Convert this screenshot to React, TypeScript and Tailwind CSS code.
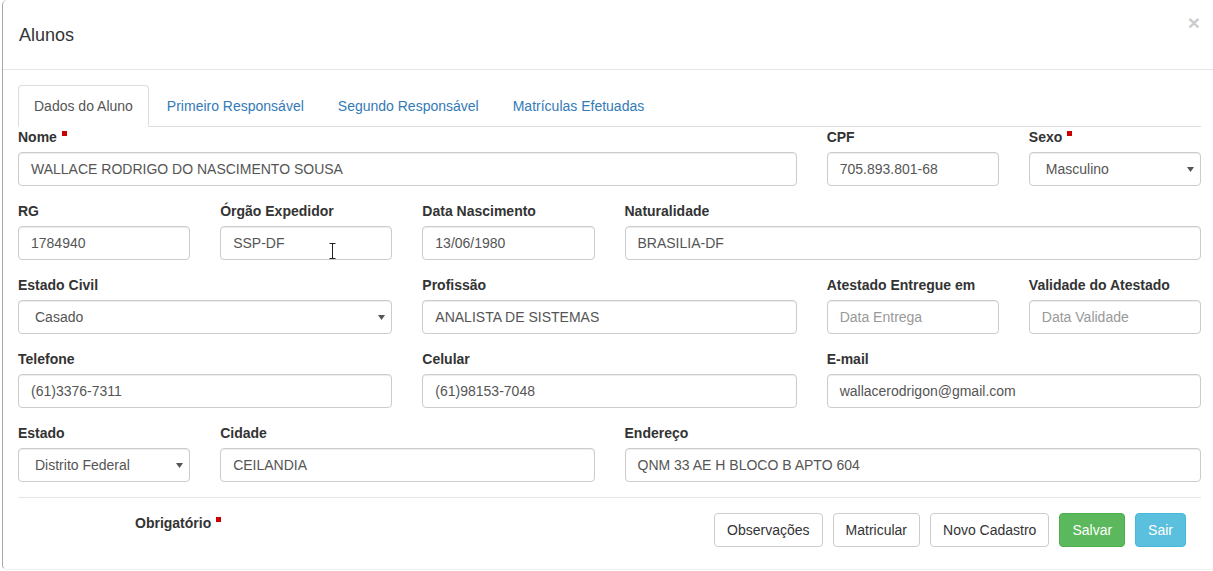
import React from "react";

const font = { fontFamily: '"Liberation Sans", Arial, Helvetica, sans-serif' };

function Req() {
  return <span className="ml-[5px] inline-block h-[5px] w-[5px] bg-[#cc0000] align-top mt-[4px]" />;
}

function Label({ text, req }: { text: string; req?: boolean }) {
  return (
    <label className="mb-[5px] block h-[20px] text-[14px] font-bold leading-[20px] text-[#333]">
      {text}
      {req && <Req />}
    </label>
  );
}

function Input({ value, placeholder }: { value?: string; placeholder?: string }) {
  return (
    <div className="flex h-[34px] items-center rounded-[4px] border border-[#ccc] px-[12px] text-[14px] text-[#555] shadow-[inset_0_1px_1px_rgba(0,0,0,0.075)]">
      {value ? value : <span className="text-[#999]">{placeholder}</span>}
    </div>
  );
}

function Select({ value }: { value: string }) {
  return (
    <div className="flex h-[34px] items-center justify-between rounded-[4px] border border-[#ccc] pl-[16px] pr-[6px] text-[14px] text-[#555] shadow-[inset_0_1px_1px_rgba(0,0,0,0.075)]">
      <span>{value}</span>
      <svg width="7" height="5" viewBox="0 0 7 5" className="mt-[1px]">
        <path d="M0 0h7L3.5 5z" fill="#555" />
      </svg>
    </div>
  );
}

function Field({
  label,
  req,
  span,
  children,
}: {
  label: string;
  req?: boolean;
  span: string;
  children: React.ReactNode;
}) {
  return (
    <div className={`${span} mb-[15px]`}>
      <Label text={label} req={req} />
      {children}
    </div>
  );
}

function Btn({ text, kind }: { text: string; kind?: "success" | "info" }) {
  const cls =
    kind === "success"
      ? "bg-[#5cb85c] border-[#4cae4c] text-white"
      : kind === "info"
      ? "bg-[#5bc0de] border-[#46b8da] text-white"
      : "bg-white border-[#ccc] text-[#333]";
  return (
    <button className={`h-[34px] rounded-[4px] border px-[12px] text-[14px] ${cls}`}>{text}</button>
  );
}

export default function App() {
  const tabs = ["Dados do Aluno", "Primeiro Responsável", "Segundo Responsável", "Matrículas Efetuadas"];
  return (
    <div className="relative h-[571px] w-[1213px] overflow-hidden bg-white" style={font}>
      <div className="ml-[2px] h-[570px] w-[1214px] rounded-[5px] border-l border-b border-l-[#a9a9a9] border-b-[#f0f0f0] bg-white">
        {/* Header */}
        <div className="flex h-[70px] items-center justify-between border-b border-[#e5e5e5] pl-[16px] pr-[16px]">
          <h4 className="mt-[1px] text-[18px] text-[#333]">Alunos</h4>
          <span className="mt-[-24px] text-[21px] font-bold leading-none text-[#000] opacity-20">×</span>
        </div>

        {/* Body */}
        <div className="px-[15px] pt-[15px]">
          <ul className="flex border-b border-[#ddd]">
            {tabs.map((t, i) => (
              <li key={t} className="mb-[-1px] mr-[2px]">
                <a
                  className={
                    i === 0
                      ? "block rounded-t-[4px] border border-[#ddd] border-b-transparent bg-white px-[15px] py-[10px] text-[14px] leading-[20px] text-[#555]"
                      : "block border border-transparent px-[15px] py-[10px] text-[14px] leading-[20px] text-[#337ab7]"
                  }
                >
                  {t}
                </a>
              </li>
            ))}
          </ul>

          <div className="grid grid-cols-6 gap-x-[30px]">
            <Field label="Nome" req span="col-span-4">
              <Input value="WALLACE RODRIGO DO NASCIMENTO SOUSA" />
            </Field>
            <Field label="CPF" span="col-span-1">
              <Input value="705.893.801-68" />
            </Field>
            <Field label="Sexo" req span="col-span-1">
              <Select value="Masculino" />
            </Field>

            <Field label="RG" span="col-span-1">
              <Input value="1784940" />
            </Field>
            <Field label="Órgão Expedidor" span="col-span-1">
              <div className="relative">
                <Input value="SSP-DF" />
                <svg
                  className="absolute left-[109px] top-[17px]"
                  width="7"
                  height="16"
                  viewBox="0 0 7 16"
                >
                  <path d="M0.5 0.5h6M3.5 0.5v15M0.5 15.5h6" stroke="#222" strokeWidth="1" fill="none" />
                </svg>
              </div>
            </Field>
            <Field label="Data Nascimento" span="col-span-1">
              <Input value="13/06/1980" />
            </Field>
            <Field label="Naturalidade" span="col-span-3">
              <Input value="BRASILIA-DF" />
            </Field>

            <Field label="Estado Civil" span="col-span-2">
              <Select value="Casado" />
            </Field>
            <Field label="Profissão" span="col-span-2">
              <Input value="ANALISTA DE SISTEMAS" />
            </Field>
            <Field label="Atestado Entregue em" span="col-span-1">
              <Input placeholder="Data Entrega" />
            </Field>
            <Field label="Validade do Atestado" span="col-span-1">
              <Input placeholder="Data Validade" />
            </Field>

            <Field label="Telefone" span="col-span-2">
              <Input value="(61)3376-7311" />
            </Field>
            <Field label="Celular" span="col-span-2">
              <Input value="(61)98153-7048" />
            </Field>
            <Field label="E-mail" span="col-span-2">
              <Input value="wallacerodrigon@gmail.com" />
            </Field>

            <Field label="Estado" span="col-span-1">
              <Select value="Distrito Federal" />
            </Field>
            <Field label="Cidade" span="col-span-2">
              <Input value="CEILANDIA" />
            </Field>
            <Field label="Endereço" span="col-span-3">
              <Input value="QNM 33 AE H BLOCO B APTO 604" />
            </Field>
          </div>

          <div className="border-t border-[#e5e5e5]" />

          <div className="flex items-start justify-between pr-[15px] pt-[15px]">
            <div className="pl-[117px] text-[14px] font-bold leading-[20px] text-[#333]">
              Obrigatório
              <Req />
            </div>
            <div className="flex gap-[10px]">
              <Btn text="Observações" />
              <Btn text="Matricular" />
              <Btn text="Novo Cadastro" />
              <Btn text="Salvar" kind="success" />
              <Btn text="Sair" kind="info" />
            </div>
          </div>
        </div>
      </div>
    </div>
  );
}
